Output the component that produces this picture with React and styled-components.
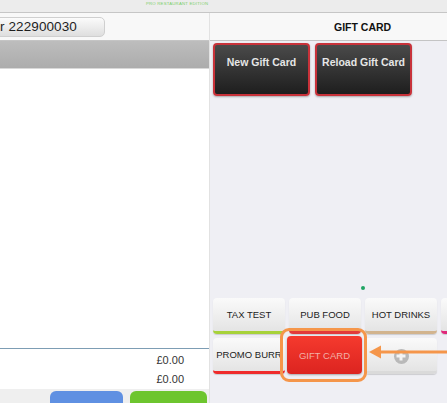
import React from 'react'
import styled, { createGlobalStyle } from 'styled-components'

// styling

const GlobalStyle = createGlobalStyle`
  html, body {
    margin: 0;
    padding: 0;
    background: #efeff4;
  }
  body {
    font-family: 'Liberation Sans', Arial, sans-serif;
  }
`

const Screen = styled.div`
  position: relative;
  width: 447px;
  height: 403px;
  overflow: hidden;
  display: flex;
  flex-direction: column;
`

const TopStrip = styled.div`
  height: 13px;
  flex: none;
  background: #ececec;
  border-bottom: 1px solid #c6c6c6;
  box-sizing: border-box;
  padding-left: 146px;
  font-size: 4.3px;
  line-height: 7px;
  letter-spacing: 0.2px;
  color: #7ccf6a;
  white-space: nowrap;
`

const Main = styled.div`
  flex: 1;
  display: flex;
  min-height: 0;
`

const LeftPanel = styled.div`
  width: 210px;
  flex: none;
  display: flex;
  flex-direction: column;
  background: #ffffff;
  border-right: 1px solid #e2e2e2;
  box-sizing: border-box;
  overflow: hidden;
`

const OrderBar = styled.div`
  height: 28px;
  flex: none;
  display: flex;
  align-items: center;
  background: #f8f8f8;
  border-bottom: 1px solid #c4c4c4;
  box-sizing: border-box;
`

const OrderButton = styled.div`
  width: 113px;
  height: 20px;
  margin-left: -8px;
  padding-left: 7px;
  box-sizing: border-box;
  display: flex;
  align-items: center;
  border-radius: 5px;
  border: 1px solid #cfcfcf;
  background: linear-gradient(#fbfbfb, #dedede);
  font-size: 13.5px;
  color: #1e1e1e;
  letter-spacing: 0.1px;
`

const GreyBar = styled.div`
  height: 27px;
  flex: none;
  background: linear-gradient(#bdbdbd, #acacac);
  border-bottom: 1px solid #d8d8d8;
`

const ListArea = styled.div`
  flex: 1;
  border-bottom: 1px solid #7d9db4;
`

const TotalRow = styled.div`
  height: 19px;
  flex: none;
  display: flex;
  align-items: center;
  justify-content: flex-end;
  padding: 2px 25px 0 0;
  box-sizing: border-box;
  font-size: 11px;
  color: #333;
`

const Footer = styled.div`
  height: 12px;
  flex: none;
  margin-top: 2px;
  display: flex;
  align-items: flex-start;
  gap: 7px;
  padding: 2px 0 0 50px;
  background: #efefef;
`

const FooterButton = styled.div`
  width: ${(p) => p.$width}px;
  height: 20px;
  border-radius: 6px 6px 0 0;
  background: ${(p) => p.$color};
`

const RightPanel = styled.div`
  flex: 1;
  min-width: 0;
  display: flex;
  flex-direction: column;
  background: #efeff4;
  overflow: hidden;
`

const RightHeader = styled.div`
  height: 28px;
  flex: none;
  display: flex;
  align-items: center;
  padding-left: 124px;
  background: #f8f8f8;
  border-bottom: 1px solid #c4c4c4;
  box-sizing: border-box;
  font-size: 10.5px;
  font-weight: bold;
  color: #111;
`

const GiftRow = styled.div`
  display: flex;
  gap: 5px;
  padding: 2px 0 0 3px;
`

const GiftButton = styled.div`
  width: 97px;
  height: 53px;
  flex: none;
  box-sizing: border-box;
  border: 2px solid #c8323a;
  border-radius: 4px;
  background: linear-gradient(#4a4a4a, #1e1e1e);
  color: #e6e6e6;
  font-size: 10.5px;
  font-weight: bold;
  text-align: center;
  padding-top: 11px;
  box-shadow: 0 1px 2px rgba(0, 0, 0, 0.3);
`

const DotArea = styled.div`
  flex: 1;
  display: flex;
  align-items: flex-end;
  padding: 0 0 8px 151px;
`

const Dot = styled.div`
  width: 4px;
  height: 4px;
  border-radius: 50%;
  background: #1fa463;
`

const CategoryGrid = styled.div`
  display: grid;
  grid-template-columns: repeat(4, 72px);
  grid-auto-rows: 36px;
  gap: 4px;
  padding: 0 0 29px 3px;
`

const CategoryButton = styled.div`
  position: relative;
  display: flex;
  align-items: center;
  justify-content: center;
  border-radius: 4px;
  overflow: hidden;
  background: linear-gradient(#fafafa, #e4e4e4);
  box-shadow: 0 1px 1px rgba(0, 0, 0, 0.15);
  border-bottom: 3px solid ${(p) => p.$bar || '#dadada'};
  box-sizing: border-box;
  font-size: 9.5px;
  color: #222;
  white-space: nowrap;
`

const ActiveButton = styled(CategoryButton)`
  margin: -2px -1px 0 -2px;
  background: linear-gradient(#f53a2e, #dc2420);
  color: #f2b0a6;
  border-bottom: 0;
  box-shadow: 0 1px 2px rgba(0, 0, 0, 0.3);
`

const PlusIcon = styled.div`
  width: 15px;
  height: 15px;
  margin-top: 3px;
  border-radius: 50%;
  background: #b9b9b9;
  position: relative;
  &::before,
  &::after {
    content: '';
    position: absolute;
    background: #f4f4f4;
    left: 50%;
    top: 50%;
    transform: translate(-50%, -50%);
  }
  &::before {
    width: 9px;
    height: 3px;
  }
  &::after {
    width: 3px;
    height: 9px;
  }
`

// annotation overlays

const Highlight = styled.div`
  position: absolute;
  left: 280px;
  top: 328px;
  width: 87px;
  height: 54px;
  box-sizing: border-box;
  border: 3px solid #f5964a;
  border-radius: 9px;
`

const ArrowSvg = styled.svg`
  position: absolute;
  left: 368px;
  top: 344px;
`

function Arrow() {
  return (
    <ArrowSvg width="79" height="16" viewBox="0 0 79 16">
      <line x1="10" y1="8" x2="79" y2="8" stroke="#f5964a" strokeWidth="3" />
      <polygon points="1,8 13,1.5 13,14.5" fill="#f5964a" />
    </ArrowSvg>
  )
}

const categories = [
  { label: 'TAX TEST', bar: '#a7d23a' },
  { label: 'PUB FOOD', bar: '#e23a3a' },
  { label: 'HOT DRINKS', bar: '#d2b48e' },
  { label: '', bar: '#e0287a' },
  { label: 'PROMO BURR', bar: '#ef2b2b' },
]

export default function App() {
  return (
    <>
      <GlobalStyle />
      <Screen>
        <TopStrip>PRO RESTAURANT EDITION</TopStrip>
        <Main>
          <LeftPanel>
            <OrderBar>
              <OrderButton>r 222900030</OrderButton>
            </OrderBar>
            <GreyBar />
            <ListArea />
            <TotalRow>£0.00</TotalRow>
            <TotalRow>£0.00</TotalRow>
            <Footer>
              <FooterButton $width={73} $color="#5f90e2" />
              <FooterButton $width={77} $color="#6dc52e" />
            </Footer>
          </LeftPanel>
          <RightPanel>
            <RightHeader>GIFT CARD</RightHeader>
            <GiftRow>
              <GiftButton>New Gift Card</GiftButton>
              <GiftButton>Reload Gift Card</GiftButton>
            </GiftRow>
            <DotArea>
              <Dot />
            </DotArea>
            <CategoryGrid>
              {categories.map((c, i) => (
                <CategoryButton key={i} $bar={c.bar}>
                  {c.label}
                </CategoryButton>
              ))}
              <ActiveButton>GIFT CARD</ActiveButton>
              <CategoryButton>
                <PlusIcon />
              </CategoryButton>
            </CategoryGrid>
          </RightPanel>
        </Main>
        <Highlight />
        <Arrow />
      </Screen>
    </>
  )
}
